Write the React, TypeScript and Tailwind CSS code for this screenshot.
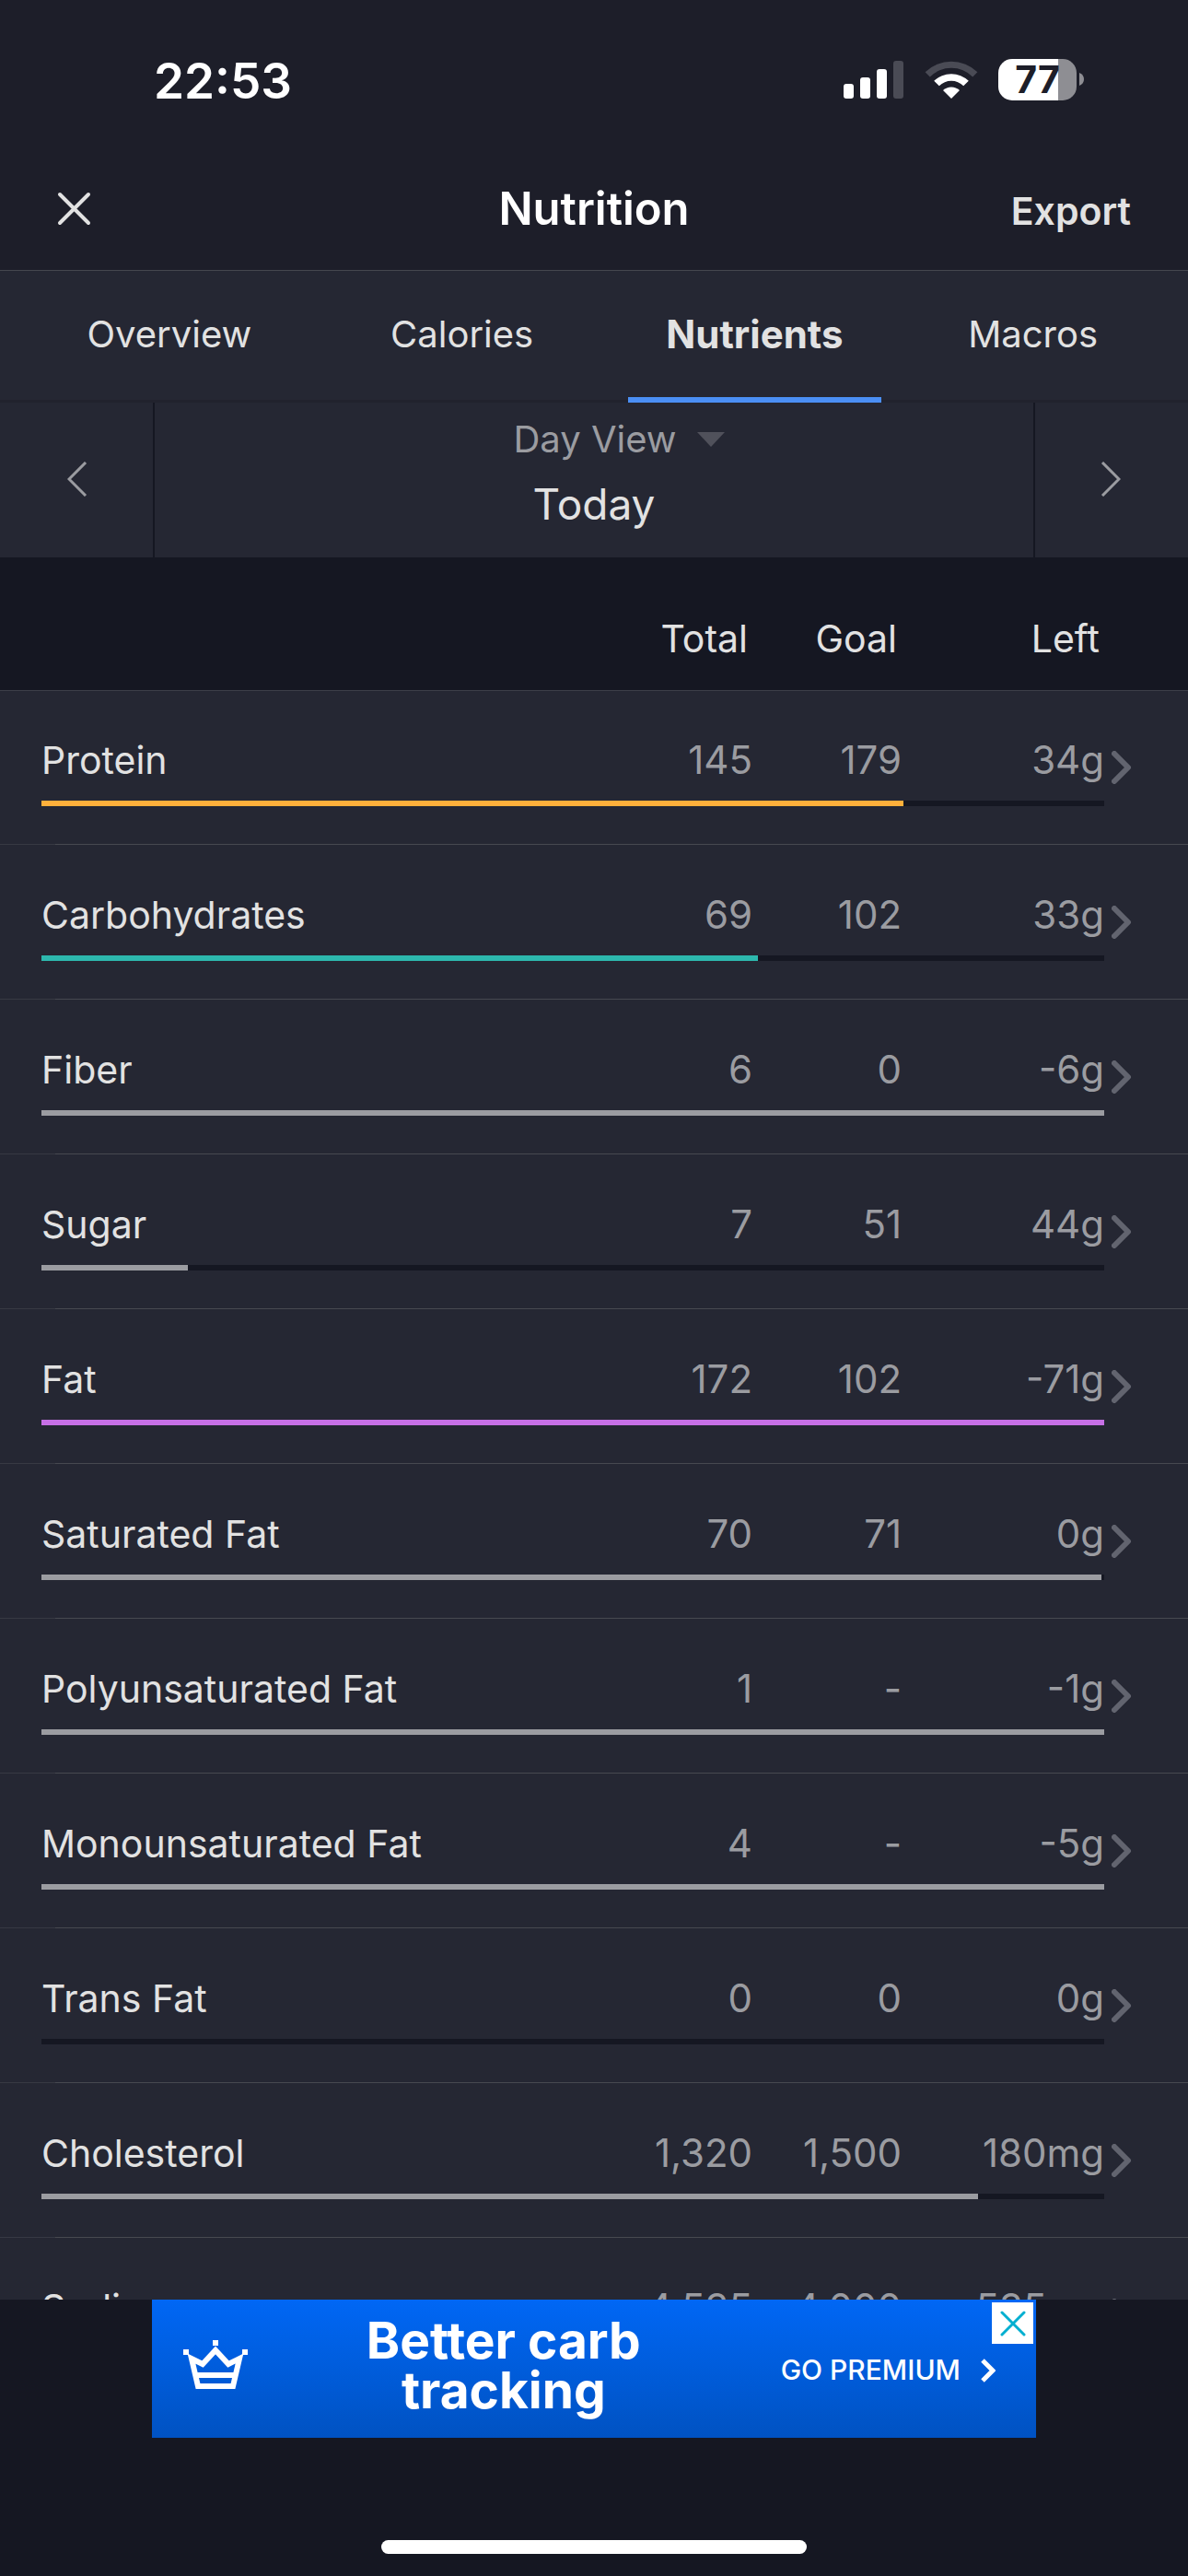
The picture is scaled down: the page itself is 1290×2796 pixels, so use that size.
import { useState } from 'react';

type Nutrient = {
  name: string;
  total: string;
  goal: string;
  left: string;
  percent: number;
  bar: string;
};

const tabs = ['Overview', 'Calories', 'Nutrients', 'Macros'];

const nutrients: Nutrient[] = [
  { name: 'Protein', total: '145', goal: '179', left: '34g', percent: 81.1, bar: 'bg-[#ffb03b]' },
  { name: 'Carbohydrates', total: '69', goal: '102', left: '33g', percent: 67.4, bar: 'bg-[#2db8ae]' },
  { name: 'Fiber', total: '6', goal: '0', left: '-6g', percent: 100, bar: 'bg-[#9b9ca1]' },
  { name: 'Sugar', total: '7', goal: '51', left: '44g', percent: 13.8, bar: 'bg-[#9b9ca1]' },
  { name: 'Fat', total: '172', goal: '102', left: '-71g', percent: 100, bar: 'bg-[#c770e6]' },
  { name: 'Saturated Fat', total: '70', goal: '71', left: '0g', percent: 99.7, bar: 'bg-[#9b9ca1]' },
  { name: 'Polyunsaturated Fat', total: '1', goal: '-', left: '-1g', percent: 100, bar: 'bg-[#9b9ca1]' },
  { name: 'Monounsaturated Fat', total: '4', goal: '-', left: '-5g', percent: 100, bar: 'bg-[#9b9ca1]' },
  { name: 'Trans Fat', total: '0', goal: '0', left: '0g', percent: 0, bar: 'bg-[#9b9ca1]' },
  { name: 'Cholesterol', total: '1,320', goal: '1,500', left: '180mg', percent: 88.1, bar: 'bg-[#9b9ca1]' },
  { name: 'Sodium', total: '4,535', goal: '4,000', left: '-535mg', percent: 100, bar: 'bg-[#9b9ca1]' },
];

function StatusBar() {
  return (
    <div className="flex h-[172px] items-center justify-between pr-[113px] pl-[167px] text-white">
      <span className="pt-1 text-[53px] leading-[60px] font-semibold">22:53</span>
      <div className="flex items-center">
        <svg width="65" height="41" viewBox="0 0 65 41" fill="currentColor" aria-hidden="true">
          <rect x="0" y="25" width="11" height="16" rx="3" />
          <rect x="18" y="18" width="11" height="23" rx="3" />
          <rect x="36" y="9" width="11" height="32" rx="3" />
          <rect x="54" y="0" width="11" height="41" rx="3" fill="#4a4b55" />
        </svg>
        <svg className="ml-[23px]" width="58" height="42" viewBox="0 0 58 42" fill="currentColor" aria-hidden="true">
          <path d="M0.6 13.2A41 41 0 0 1 57.4 13.2L52.2 18.4A33 33 0 0 0 5.8 18.4Z" fill="#4a4b55" />
          <path d="M10.2 22.8A27 27 0 0 1 47.8 22.8L42.2 28.2A19 19 0 0 0 15.8 28.2Z" />
          <path d="M20 33A13 13 0 0 1 38 33L29 42Z" />
        </svg>
        <div className="ml-[22px] flex items-center">
          <div className="flex h-[45px] w-[85px] items-center justify-center rounded-[15px] bg-[linear-gradient(to_right,#fff_65px,#8e8e93_65px)] text-[41px] leading-[45px] font-bold text-[#1d1e29]">
            77
          </div>
          <svg className="ml-[3px]" width="5" height="14" viewBox="0 0 5 14" aria-hidden="true">
            <path d="M0 0Q5 2 5 7T0 14Z" fill="#8e8e93" />
          </svg>
        </div>
      </div>
    </div>
  );
}

function Header() {
  return (
    <header className="grid h-[122px] grid-cols-3 items-center border-b border-[#45474f] px-[62px] pb-3">
      <button type="button" aria-label="Close" className="justify-self-start text-[#e2e2e2]">
        <svg width="37" height="37" viewBox="0 0 37 37" fill="none" stroke="currentColor" strokeWidth="4" strokeLinecap="round">
          <path d="M3 3L34 34M34 3L3 34" />
        </svg>
      </button>
      <h1 className="text-center text-[49px] leading-[60px] font-semibold text-white">Nutrition</h1>
      <button type="button" className="justify-self-end pt-1 text-[41px] leading-[50px] font-semibold text-[#e2e2e2]">
        Export
      </button>
    </header>
  );
}

function Tabs() {
  const [active, setActive] = useState('Nutrients');

  return (
    <nav className="flex h-[143px] gap-[42px] border-b-[3px] border-[#21222d] px-[46px]">
      {tabs.map((tab) => (
        <button
          key={tab}
          type="button"
          onClick={() => setActive(tab)}
          className={`-mb-[3px] border-b-6 text-center leading-[50px] text-[#e2e2e2] ${
            tab === active ? 'border-[#4b8ff5] text-[42px] font-bold' : 'border-transparent text-[40px]'
          } ${tab === 'Macros' ? 'flex-[245]' : 'flex-[276]'}`}
        >
          {tab}
        </button>
      ))}
    </nav>
  );
}

function DatePicker() {
  return (
    <div className="flex h-[168px] text-[#9b9ca1]">
      <button type="button" aria-label="Previous day" className="flex w-[168px] items-center justify-center border-r-2 border-[#151722] pb-[2px] pl-[2px]">
        <svg width="22" height="38" viewBox="0 0 22 38" fill="none" stroke="currentColor" strokeWidth="3">
          <path d="M20 1L2 19L20 37" />
        </svg>
      </button>
      <div className="flex flex-1 flex-col items-center">
        <button type="button" className="mt-[14px] flex items-center gap-[22px] pl-[54px] text-[40px] leading-[52px]">
          Day View
          <svg width="30" height="16" viewBox="0 0 30 16" fill="#50515b" aria-hidden="true">
            <path d="M0 0H30L15 16Z" />
          </svg>
        </button>
        <span className="mt-4 text-[46px] leading-[56px] text-[#e2e2e2]">Today</span>
      </div>
      <button type="button" aria-label="Next day" className="flex w-[168px] items-center justify-center border-l-2 border-[#151722] pr-[2px] pb-[2px]">
        <svg width="22" height="38" viewBox="0 0 22 38" fill="none" stroke="currentColor" strokeWidth="3">
          <path d="M2 1L20 19L2 37" />
        </svg>
      </button>
    </div>
  );
}

function NutrientRows({ item }: { item: Nutrient }) {
  return (
    <tbody className="bg-[#252733]">
      <tr className="h-[120px] align-bottom text-[42px] text-[#9b9ca1]">
        <th scope="row" className="pb-[19px] pl-[45px] text-left text-[41px] font-normal text-[#e2e2e2]">{item.name}</th>
        <td className="pb-[19px] text-right">{item.total}</td>
        <td className="pb-[19px] text-right">{item.goal}</td>
        <td className="pb-[19px] text-right">{item.left}</td>
        <td className="pb-[18px] pl-2">
          <button type="button" aria-label={`${item.name} details`} className="block">
            <svg width="22" height="36" viewBox="0 0 22 36" fill="none" stroke="#62646f" strokeWidth="6" strokeLinecap="round" strokeLinejoin="round">
              <path d="M3 3L18 18L3 33" />
            </svg>
          </button>
        </td>
      </tr>
      <tr className="h-[47px] align-top">
        <td colSpan={4} className="pl-[45px]">
          <div className="h-[6px] bg-[#151722]">
            <div className={`h-full ${item.bar}`} style={{ width: `${item.percent}%` }} />
          </div>
        </td>
        <td />
      </tr>
      <tr className="h-px">
        <td colSpan={5} className="h-px bg-[linear-gradient(to_right,#373943_60px,#474950_60px)]" />
      </tr>
    </tbody>
  );
}

function NutrientTable() {
  return (
    <div className="min-h-0 flex-1 overflow-y-auto [scrollbar-width:none]">
      <table className="w-full table-fixed text-[41px] leading-[50px]">
        <colgroup>
          <col />
          <col className="w-[180px]" />
          <col className="w-[162px]" />
          <col className="w-[220px]" />
          <col className="w-[91px]" />
        </colgroup>
        <thead className="border-b border-[#3d3f49] bg-[#151722] text-[#e2e2e2]">
          <tr className="h-[144px] text-right">
            <td />
            <th scope="col" className="pt-8 pr-[5px] font-normal">Total</th>
            <th scope="col" className="pt-8 pr-[5px] font-normal">Goal</th>
            <th scope="col" className="pt-8 pr-[5px] font-normal">Left</th>
            <td />
          </tr>
        </thead>
        {nutrients.map((item) => (
          <NutrientRows key={item.name} item={item} />
        ))}
      </table>
    </div>
  );
}

function PremiumBanner() {
  return (
    <div className="relative mx-auto h-[150px] w-[960px] max-w-full">
      <a
        href="#premium"
        className="flex h-full items-center bg-linear-to-b from-[#0067f5] to-[#0052c2] pr-[44px] pl-[33px] text-white"
      >
        <svg className="mb-2" width="72" height="56" viewBox="0 0 72 56" fill="none" stroke="currentColor" strokeWidth="6" aria-hidden="true">
          <path d="M10 21L17 51H55L62 21L50 27L36 12L22 27Z" />
          <path d="M14 39H58" />
          <path d="M33 4H39M1 14H7M65 14H71" />
        </svg>
        <span className="flex-1 pr-6 pb-2 text-center text-[55px] leading-[54px] font-bold">
          Better carb
          <br />
          tracking
        </span>
        <span className="pt-[2px] text-[30px] leading-[40px] font-medium">GO PREMIUM</span>
        <svg className="ml-[22px] mt-1" width="16" height="26" viewBox="0 0 16 26" fill="none" stroke="currentColor" strokeWidth="5">
          <path d="M2 2L13 13L2 24" />
        </svg>
      </a>
      <button type="button" aria-label="Close ad" className="absolute top-[3px] right-[3px] flex size-[45px] items-center justify-center bg-white">
        <svg width="28" height="28" viewBox="0 0 28 28" fill="none" stroke="#00afd0" strokeWidth="3" strokeLinecap="round">
          <path d="M2 2L26 26M26 2L2 26" />
        </svg>
      </button>
    </div>
  );
}

export default function App() {
  return (
    <div className="flex h-screen flex-col overflow-hidden bg-[#252733] font-['Inter',sans-serif]">
      <div className="bg-[#1d1e29]">
        <StatusBar />
        <Header />
      </div>
      <Tabs />
      <DatePicker />
      <NutrientTable />
      <footer className="bg-[#151722] pb-6">
        <PremiumBanner />
        <div className="mx-auto mt-[111px] h-[15px] w-[462px] rounded-full bg-white" />
      </footer>
    </div>
  );
}
